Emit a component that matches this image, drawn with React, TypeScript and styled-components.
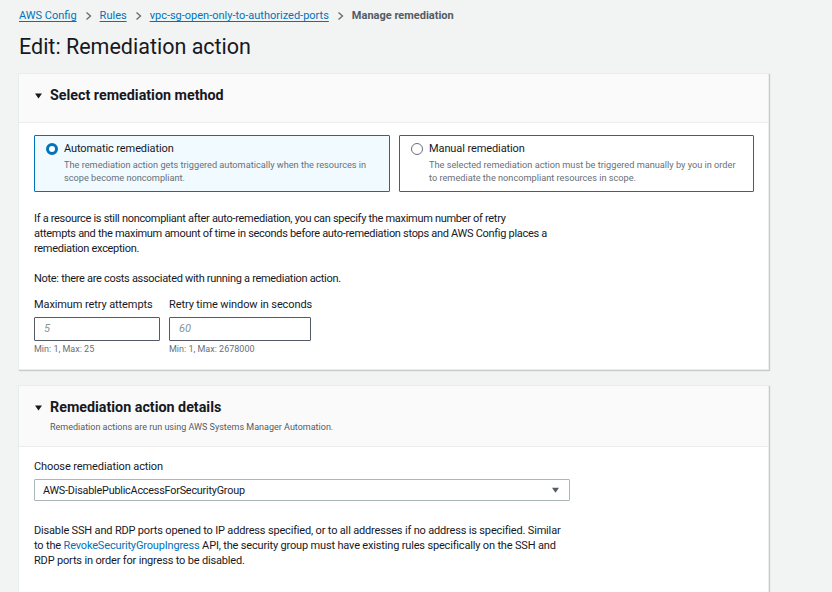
import React from "react";
import styled, { createGlobalStyle } from "styled-components";

const Global = createGlobalStyle`
  html, body { margin: 0; padding: 0; background: #f2f3f3; }
  body { font-family: Roboto, "Liberation Sans", sans-serif; color: #16191f; }
  * { box-sizing: border-box; }
`;

const Page = styled.div`
  width: 832px;
  height: 592px;
  overflow: hidden;
  padding: 8px 63px 0 18px;
  display: flex;
  flex-direction: column;
`;

const Breadcrumbs = styled.nav`
  display: flex;
  align-items: center;
  gap: 8px;
  padding-left: 1px;
  font-size: 11px;
  line-height: 16px;
`;

const Crumb = styled.a`
  color: #0073bb;
  text-decoration: underline;
  text-underline-offset: 2px;
`;

const CurrentCrumb = styled.span`
  color: #545b64;
  font-weight: 700;
`;

const Sep = styled.svg`
  width: 7px;
  height: 10px;
  flex: none;
`;

const Title = styled.h1`
  margin: 11px 0 14px 1px;
  font-size: 21.5px;
  line-height: 24px;
  font-weight: 400;
  color: #16191f;
`;

const Card = styled.section`
  background: #fff;
  border: 1px solid #eaeded;
  box-shadow: 1px 1px 1px 0 rgba(0, 28, 36, 0.18);
  margin-bottom: 15px;
  flex: none;
`;

const CardHeader = styled.header<{ $sub?: boolean }>`
  background: #fafafa;
  border-bottom: 1px solid #eaeded;
  padding: ${(p) => (p.$sub ? "12px 16px 13px 16px" : "12px 16px 17px 16px")};
`;

const HeaderRow = styled.div`
  display: flex;
  align-items: center;
  gap: 8px;
`;

const Caret = styled.svg`
  width: 7px;
  height: 8px;
  flex: none;
`;

const CardTitle = styled.h2`
  margin: 0;
  font-size: 14.3px;
  line-height: 19px;
  font-weight: 700;
  color: #16191f;
`;

const CardSub = styled.p`
  margin: 4px 0 0 15px;
  font-size: 9px;
  line-height: 12px;
  color: #545b64;
`;

const CardBody = styled.div<{ $top?: number; $bottom?: number }>`
  padding: ${(p) => p.$top ?? 12}px 15px ${(p) => p.$bottom ?? 14}px 15px;
`;

const Tiles = styled.div`
  display: grid;
  grid-template-columns: 356px 355px;
  gap: 9px;
`;

const Tile = styled.div<{ $selected?: boolean }>`
  display: flex;
  gap: 6px;
  height: 57px;
  padding: 6px 14px 0 11px;
  border: 1px solid ${(p) => (p.$selected ? "#0073bb" : "#545b64")};
  background: ${(p) => (p.$selected ? "#f1faff" : "#fff")};
  border-radius: 1px;
`;

const Radio = styled.span<{ $checked?: boolean }>`
  flex: none;
  width: 12px;
  height: 12px;
  margin-top: 1px;
  border-radius: 50%;
  border: ${(p) => (p.$checked ? "3.5px solid #0073bb" : "1px solid #687078")};
  background: #fff;
`;

const TileText = styled.div`
  display: flex;
  flex-direction: column;
`;

const TileLabel = styled.span`
  font-size: 11px;
  letter-spacing: -0.1px;
  line-height: 14px;
  color: #16191f;
`;

const TileDesc = styled.span`
  margin-top: 2px;
  font-size: 9.2px;
  line-height: 13px;
  color: #687078;
`;

const Para = styled.p<{ $top?: number; $spacing?: number }>`
  margin: ${(p) => `${p.$top ?? 0}px 0 0 0`};
  font-size: 11px;
  letter-spacing: ${(p) => p.$spacing ?? -0.3}px;
  line-height: 15px;
  color: #16191f;
`;

const Link = styled.a`
  color: #0073bb;
  text-decoration: none;
`;

const Fields = styled.div`
  display: flex;
  gap: 9px;
  margin-top: 12px;
`;

const Field = styled.div`
  display: flex;
  flex-direction: column;
`;

const Label = styled.label`
  display: block;
  font-size: 11px;
  letter-spacing: -0.1px;
  line-height: 14px;
  color: #16191f;
  margin-bottom: 5px;
`;

const Input = styled.div<{ $w: number }>`
  width: ${(p) => p.$w}px;
  height: 24px;
  border: 1px solid #545b64;
  border-radius: 1px;
  padding: 4px 9px;
  font-size: 11px;
  line-height: 14px;
  font-style: italic;
  color: #879596;
`;

const Hint = styled.span`
  margin-top: 3px;
  font-size: 9px;
  line-height: 11px;
  color: #687078;
`;

const Select = styled.div`
  width: 536px;
  height: 22px;
  border: 1px solid #aab7b8;
  border-radius: 1px;
  display: flex;
  align-items: center;
  justify-content: space-between;
  padding: 0 10px 0 8px;
  font-size: 10.8px;
  letter-spacing: -0.2px;
  color: #16191f;
`;

const Chevron = () => (
  <Sep viewBox="0 0 7 10">
    <path d="M1.5 1.5 L5.5 5 L1.5 8.5" fill="none" stroke="#687078" strokeWidth="1.4" />
  </Sep>
);

const Tri = () => (
  <Caret viewBox="0 0 7 8">
    <path d="M0 1.5 H7 L3.5 6.5 Z" fill="#16191f" />
  </Caret>
);

export default function App() {
  return (
    <>
      <Global />
      <Page>
        <Breadcrumbs>
          <Crumb>AWS Config</Crumb>
          <Chevron />
          <Crumb>Rules</Crumb>
          <Chevron />
          <Crumb>vpc-sg-open-only-to-authorized-ports</Crumb>
          <Chevron />
          <CurrentCrumb>Manage remediation</CurrentCrumb>
        </Breadcrumbs>
        <Title>Edit: Remediation action</Title>

        <Card>
          <CardHeader>
            <HeaderRow>
              <Tri />
              <CardTitle>Select remediation method</CardTitle>
            </HeaderRow>
          </CardHeader>
          <CardBody>
            <Tiles>
              <Tile $selected>
                <Radio $checked />
                <TileText>
                  <TileLabel>Automatic remediation</TileLabel>
                  <TileDesc>
                    The remediation action gets triggered automatically when the resources in
                    scope become noncompliant.
                  </TileDesc>
                </TileText>
              </Tile>
              <Tile>
                <Radio />
                <TileText>
                  <TileLabel>Manual remediation</TileLabel>
                  <TileDesc>
                    The selected remediation action must be triggered manually by you in order
                    to remediate the noncompliant resources in scope.
                  </TileDesc>
                </TileText>
              </Tile>
            </Tiles>
            <Para $top={19}>
              If a resource is still noncompliant after auto-remediation, you can specify the
              maximum number of retry
              <br />
              attempts and the maximum amount of time in seconds before auto-remediation stops and
              AWS Config places a
              <br />
              remediation exception.
            </Para>
            <Para $top={15}>Note: there are costs associated with running a remediation action.</Para>
            <Fields>
              <Field>
                <Label>Maximum retry attempts</Label>
                <Input $w={126}>5</Input>
                <Hint>Min: 1, Max: 25</Hint>
              </Field>
              <Field>
                <Label>Retry time window in seconds</Label>
                <Input $w={142}>60</Input>
                <Hint>Min: 1, Max: 2678000</Hint>
              </Field>
            </Fields>
          </CardBody>
        </Card>

        <Card>
          <CardHeader $sub>
            <HeaderRow>
              <Tri />
              <CardTitle>Remediation action details</CardTitle>
            </HeaderRow>
            <CardSub>Remediation actions are run using AWS Systems Manager Automation.</CardSub>
          </CardHeader>
          <CardBody $top={13} $bottom={40}>
            <Label>Choose remediation action</Label>
            <Select>
              <span>AWS-DisablePublicAccessForSecurityGroup</span>
              <Caret viewBox="0 0 8 8">
                <path d="M0 1.5 H8 L4 7 Z" fill="#545b64" />
              </Caret>
            </Select>
            <Para $top={22} $spacing={-0.17}>
              Disable SSH and RDP ports opened to IP address specified, or to all addresses if no
              address is specified. Similar
              <br />
              to the <Link>RevokeSecurityGroupIngress</Link> API, the security group must have
              existing rules specifically on the SSH and
              <br />
              RDP ports in order for ingress to be disabled.
            </Para>
          </CardBody>
        </Card>
      </Page>
    </>
  );
}
